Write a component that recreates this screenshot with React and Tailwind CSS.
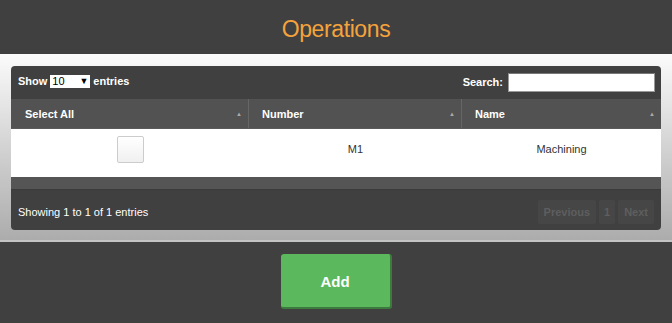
import React from "react";

const Arrow = () => (
  <span className="absolute right-[6px] top-1/2 -translate-y-1/2 text-[6px] leading-none text-[#aaaaaa]">▲</span>
);

export default function App() {
  return (
    <div className="w-[672px] h-[323px] flex flex-col font-['Liberation_Sans',Arial,sans-serif] overflow-hidden">
      <div className="h-[54px] bg-[#404040] flex items-center justify-center shrink-0 pt-[4px]">
        <h1 className="text-[23px] leading-none text-[#f5a33c] tracking-[-0.4px]">Operations</h1>
      </div>
      <div className="h-[186px] shrink-0 bg-gradient-to-b from-[#fbfbfb] to-[#acacac] px-[11px] pt-[12px]">
        <div className="bg-[#404040] rounded-[4px] overflow-hidden">
          <div className="h-[33px] flex items-center justify-between pl-[7px] pr-[6px] text-white text-[11px] font-bold">
            <div className="flex items-center gap-[3px] -mt-[3px]">
              <span>Show</span>
              <span className="h-[13px] w-[40px] bg-white text-black text-[11px] font-normal flex items-center justify-between pl-[2px] pr-[2px] leading-none">
                <span>10</span>
                <span className="text-[9px]">▼</span>
              </span>
              <span>entries</span>
            </div>
            <div className="flex items-center gap-[5px]">
              <span>Search:</span>
              <div className="w-[147px] h-[19px] bg-white border border-[#999] border-t-[#777]" />
            </div>
          </div>
          <div className="flex h-[30px] bg-[#525252] border-b border-[#5a5a5a] text-white text-[11px] font-bold">
            <div className="relative w-[238px] flex items-center pl-[14px] pt-[2px] border-r border-[#666]">Select All<Arrow /></div>
            <div className="relative w-[213px] flex items-center pl-[13px] pt-[2px] border-r border-[#666]">Number<Arrow /></div>
            <div className="relative flex-1 flex items-center pl-[13px] pt-[2px]">Name<Arrow /></div>
          </div>
          <div className="flex h-[48px] bg-white text-[11px] text-[#333] pb-[7px]">
            <div className="w-[238px] flex items-center justify-center">
              <div className="w-[27px] h-[27px] rounded-[2px] border border-[#cccccc] bg-gradient-to-b from-white to-[#f0f0f0]" />
            </div>
            <div className="w-[213px] flex items-center justify-center">M1</div>
            <div className="flex-1 flex items-center justify-center">Machining</div>
          </div>
          <div className="h-[13px] bg-[#555555] border-b border-[#3a3a3a]" />
          <div className="h-[40px] flex items-center justify-between pl-[7px] pr-[7px] pt-[4px]">
            <span className="text-white text-[11px]">Showing 1 to 1 of 1 entries</span>
            <div className="flex items-center gap-[3px] text-[11px] font-bold text-[#5e5e5e]">
              <span className="h-[24px] px-[6px] flex items-center bg-[#464646] rounded-[2px]">Previous</span>
              <span className="h-[24px] px-[5px] flex items-center bg-[#464646] rounded-[2px]">1</span>
              <span className="h-[24px] px-[6px] flex items-center bg-[#464646] rounded-[2px]">Next</span>
            </div>
          </div>
        </div>
      </div>
      <div className="h-[2px] bg-[#c4c4c4] shrink-0" />
      <div className="flex-1 bg-[#404040] flex justify-center pt-[12px]">
        <button className="w-[111px] h-[55px] bg-[#5cb85c] rounded-[3px] border-r-2 border-b-2 border-[#3d7a3d] text-white text-[15px] font-bold pt-[3px]">
          Add
        </button>
      </div>
    </div>
  );
}
